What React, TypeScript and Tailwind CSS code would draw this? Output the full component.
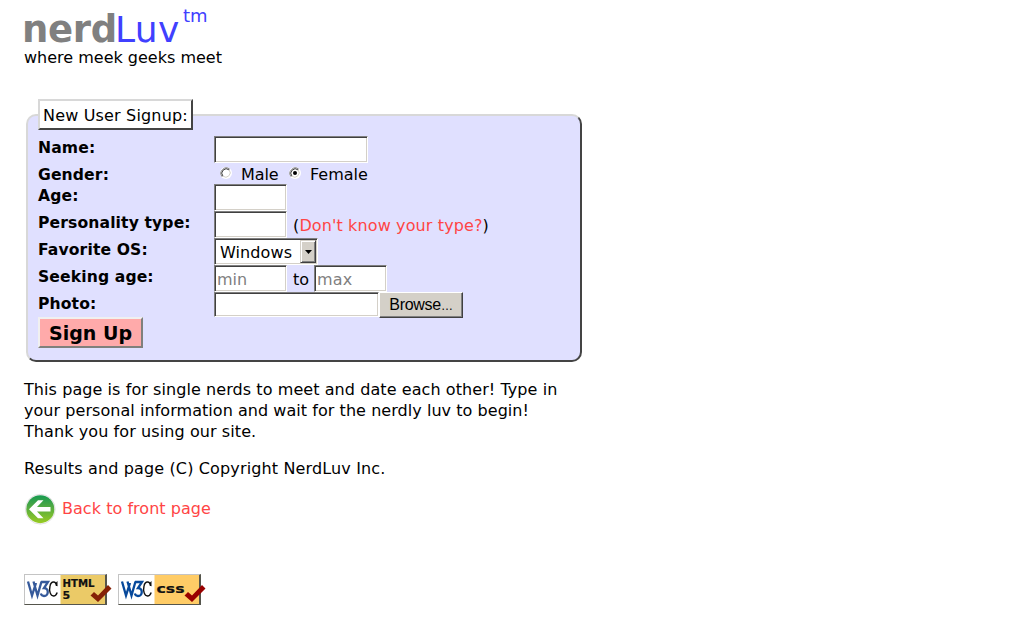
import React from "react";

const bevelIn =
  "block shrink-0 rounded-none border border-t-[#808080] border-l-[#808080] border-r-white border-b-white bg-white shadow-[inset_1px_1px_0_#404040,inset_-1px_-1px_0_#d4d0c8] outline-none text-[16px] placeholder:text-[#808080]";

function Row({ label, height, children }: { label: string; height: string; children: React.ReactNode }) {
  return (
    <div className={`flex ${height}`}>
      <div className="w-[176px] shrink-0 pt-px whitespace-nowrap text-[15.6px] leading-[22px] font-bold tracking-[0.12px]">{label}</div>
      <div className="flex items-start whitespace-nowrap">{children}</div>
    </div>
  );
}

function Radio({ on }: { on?: boolean }) {
  return (
    <svg width="12" height="12" viewBox="0 0 12 12" className="-mt-[4px] block shrink-0">
      <circle cx="6" cy="6" r="6" fill="#fff" />
      <path d="M2.200 9.800A5.400 5.400 0 0 1 9.800 2.200" fill="none" stroke="#808080" />
      <path d="M2.900 9.100A4.400 4.400 0 0 1 9.100 2.900" fill="none" stroke="#404040" />
      <path d="M9.100 2.900A4.400 4.400 0 0 1 2.900 9.100" fill="none" stroke="#d4d0c8" />
      {on && <circle cx="6" cy="6" r="2" fill="#000" />}
    </svg>
  );
}

function BackIcon() {
  return (
    <svg width="32" height="32" viewBox="0 0 32 32" className="block shrink-0">
      <defs>
        <linearGradient id="back" x1="0" y1="0" x2="0" y2="1">
          <stop offset="0" stopColor="#159a50" />
          <stop offset=".35" stopColor="#48a646" />
          <stop offset="1" stopColor="#99cb22" />
        </linearGradient>
      </defs>
      <circle cx="16.300" cy="16.200" r="14.900" fill="#fff" stroke="#d7d7d7" strokeWidth=".8" />
      <circle cx="16.300" cy="16.200" r="14" fill="url(#back)" />
      <path d="M5 16.300 14 7.300H19.500L13 14H26.500V18.600H13L19.500 25.300H14z" fill="#fff" />
    </svg>
  );
}

function Badge({ html }: { html?: boolean }) {
  return (
    <svg width="88" height="31" viewBox="0 0 88 31" className="block shrink-0">
      <rect width="83" height="31" fill="#c4c4c4" />
      <path d="M83 0v31H0l1-1h80V1z" fill="#55554c" />
      <rect x="1" y="1" width="36" height="29" fill="#fff" />
      <rect x="36.500" y="1" width="44.500" height="29" fill={html ? "#ebca67" : "#ffcc66"} />
      <g fill="none" stroke={html ? "#365a9b" : "#07499b"} strokeWidth="2.300">
        <path d="M4 7.500 8 21.500 12 9M9.500 7.500 13.500 21.500 17.500 7.500" />
        <path d="M17 8h7l-4 6c5 0 5 8 0 8-2 0-2.700-1-3.200-2.500" />
      </g>
      <path d="M32.500 12c-.5-5.500-5.500-5-6.500 0-1.200 5 .5 10 3.500 10 2 0 3-1.500 3.700-3.500" fill="none" stroke="#111" strokeWidth="1.400" />
      <path d="M31 9.500 33.500 12.500V7z" fill="#111" />
      {html ? (
        <g fontFamily="DejaVu Sans, sans-serif" fontWeight="bold" fontSize="10" fill="#111" stroke="#111" strokeWidth=".2">
          <text x="38.500" y="13" textLength="32" lengthAdjust="spacingAndGlyphs">HTML</text>
          <text x="38.500" y="25" fontSize="11">5</text>
        </g>
      ) : (
        <text x="38.500" y="18.500" textLength="28" lengthAdjust="spacingAndGlyphs" fontFamily="DejaVu Sans, sans-serif" fontWeight="bold" fontSize="11.500" fill="#111" stroke="#111" strokeWidth=".2">css</text>
      )}
      <path d="M66.500 21.500 70 18 74 21.500 84 11 87.500 14.500 74 28z" fill={html ? "#852006" : "#990000"} />
    </svg>
  );
}

export default function App() {
  return (
    <div className="h-[617px] w-[1016px] overflow-hidden bg-white pl-6 font-['DejaVu_Sans',Verdana,sans-serif] text-[16px] leading-[21px] text-black">
      <header className="flex h-[99px] flex-col pt-[8px]">
        <div className="-ml-[2px] flex h-[39px] items-start whitespace-nowrap">
          <span className="w-[93px] pt-[2px] text-[37px] leading-[40px] font-bold tracking-[-0.3px] text-[#808080]">nerd</span>
          <span className="w-[68px] pt-[2px] text-[36px] leading-[40px] tracking-[0.4px] text-[#4040ff]">Luv</span>
          <span className="text-[18px] leading-[15px] text-[#4040ff]">tm</span>
        </div>
        <p>where meek geeks meet</p>
      </header>

      <form className="ml-[2px] w-[556px]">
        <div className="mt-[15px] h-[248px] rounded-[10px] border-2 border-t-[#d8d8d8] border-r-[#444] border-b-[#444] border-l-[#d8d8d8] bg-[#e0e0ff] pl-[10px]">
          <div className="-mt-[17px] mb-[6px] flex h-[31px] w-[155px] items-center border-2 border-t-[#d8d8d8] border-r-[#444] border-b-[#444] border-l-[#d8d8d8] bg-white pt-px pl-[3px] tracking-[0.17px] whitespace-nowrap">New User Signup:</div>
          <Row label="Name:" height="h-[27px]">
            <input aria-label="Name" className={`${bevelIn} h-[27px] w-[154px]`} />
          </Row>
          <Row label="Gender:" height="h-[21px]">
            <label className="flex items-center pl-[6px] leading-[22px]"><Radio /><span className="ml-[9px] w-[48px] pt-px tracking-[-0.1px]">Male</span></label>
            <label className="flex items-center leading-[22px]"><Radio on /><span className="ml-[9px] pt-px">Female</span></label>
          </Row>
          <Row label="Age:" height="h-[27px]">
            <input aria-label="Age" className={`${bevelIn} h-[27px] w-[73px]`} />
          </Row>
          <Row label="Personality type:" height="h-[27px]">
            <input aria-label="Personality type" className={`${bevelIn} h-[27px] w-[73px]`} />
            <span className="pt-[4px] pl-[6px] tracking-[0.12px]">(<a className="text-[#ff4545]">Don't know your type?</a>)</span>
          </Row>
          <Row label="Favorite OS:" height="h-[27px]">
            <div className={`${bevelIn} h-[27px] w-[104px]`}>
              <div className="flex h-full items-center pl-[5px]">
                <span className="w-[80px] pt-px tracking-[0.1px]">Windows</span>
                <span className="flex h-[23px] w-[16px] items-center justify-center border border-t-[#d4d0c8] border-r-[#404040] border-b-[#404040] border-l-[#d4d0c8] bg-[#d4d0c8] shadow-[inset_1px_1px_0_#fff,inset_-1px_-1px_0_#808080]">
                  <svg width="7" height="4" viewBox="0 0 7 4"><path d="M0 0h7L3.500 4z" /></svg>
                </span>
              </div>
            </div>
          </Row>
          <Row label="Seeking age:" height="h-[27px]">
            <input aria-label="Minimum age" placeholder="min" className={`${bevelIn} h-[27px] w-[73px] pt-px pl-[2px]`} />
            <span className="w-[27px] pt-[4px] pl-[6px]">to</span>
            <input aria-label="Maximum age" placeholder="max" className={`${bevelIn} h-[27px] w-[73px] pt-px pl-[2px] tracking-[0.2px]`} />
          </Row>
          <Row label="Photo:" height="h-[25px]">
            <input aria-label="Photo" className={`${bevelIn} h-[25px] w-[165px]`} />
            <button type="button" className="flex h-[26px] w-[84px] items-center justify-center border border-t-white border-r-[#404040] border-b-[#404040] border-l-white bg-[#d4d0c8] pt-px font-['Liberation_Sans',Arial,sans-serif] text-[16px] tracking-[-0.3px] shadow-[inset_-1px_-1px_0_#808080]"><span>Browse<span className="text-[12px]">…</span></span></button>
          </Row>
          <button type="button" className="flex h-[31px] w-[105px] items-center justify-center border-2 border-t-[#f0f0f0] border-r-[#80807c] border-b-[#80807c] border-l-[#f0f0f0] bg-[#ffaaaa] pt-px text-[19px] font-bold whitespace-nowrap">Sign Up</button>
        </div>
      </form>

      <p className="mt-[17px] whitespace-nowrap">
        <span className="tracking-[0.075px]">This page is for single nerds to meet and date each other! Type in</span><br />
        <span className="tracking-[0.05px]">your personal information and wait for the nerdly luv to begin!</span><br />
        <span className="tracking-[0.09px]">Thank you for using our site.</span>
      </p>
      <p className="mt-[16px] tracking-[0.14px] whitespace-nowrap">Results and page (C) Copyright NerdLuv Inc.</p>
      <div className="mt-[14px] flex h-[32px] items-center">
        <BackIcon />
        <a className="ml-[6px] pb-[2px] tracking-[0.04px] text-[#ff4545]">Back to front page</a>
      </div>
      <div className="mt-[49px] flex gap-[6px]">
        <Badge html />
        <Badge />
      </div>
    </div>
  );
}
